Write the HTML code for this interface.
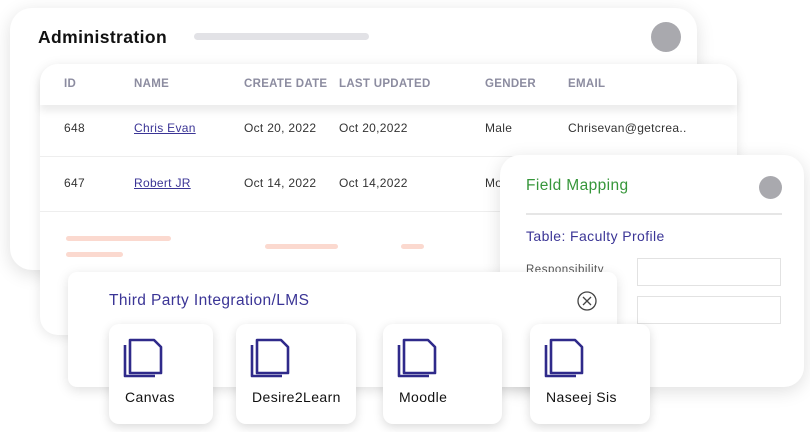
<!DOCTYPE html>
<html><head><style>
*{margin:0;padding:0;box-sizing:border-box}
body{width:810px;height:432px;background:#fff;position:relative;overflow:hidden;font-family:"Liberation Sans",sans-serif;}
.abs{position:absolute}
.card{position:absolute;background:#fff;box-shadow:0 4px 18px rgba(0,0,0,.13);}
.hdr{font-size:11.5px;color:#8c8ca0;font-weight:bold;position:absolute;top:78px;letter-spacing:.3px}
.cell{font-size:12px;color:#333;position:absolute;letter-spacing:.3px}
.lnk{color:#3b3596;text-decoration:underline}
.tile{position:absolute;top:324px;height:100px;background:#fff;border-radius:10px;box-shadow:0 3px 10px rgba(0,0,0,.15)}
.tile svg{position:absolute;left:13px;top:13px}
.tile span{position:absolute;left:16px;top:65px;font-size:14px;color:#111;letter-spacing:.4px}
.pk{position:absolute;height:5px;border-radius:3px;background:#fbd9cf}
</style></head><body>
<div class="card" style="left:10px;top:8px;width:687px;height:262px;border-radius:22px"></div>
<div class="abs" style="left:38px;top:27px;font-size:17.5px;font-weight:bold;color:#111;letter-spacing:.4px">Administration</div>
<div class="abs" style="left:194px;top:33px;width:175px;height:7px;border-radius:4px;background:#e2e2e6"></div>
<div class="abs" style="left:651px;top:22px;width:30px;height:30px;border-radius:50%;background:#a9a9ae"></div>

<div class="card" style="left:40px;top:64px;width:697px;height:271px;border-radius:18px;box-shadow:0 2px 12px rgba(0,0,0,.1)"></div>
<div class="abs" style="left:40px;top:64px;width:697px;height:41px;border-radius:18px 18px 0 0;background:#fff;box-shadow:0 6px 8px rgba(0,0,0,.08)"></div>
<div class="hdr" style="left:64px">ID</div>
<div class="hdr" style="left:134px">NAME</div>
<div class="hdr" style="left:244px">CREATE DATE</div>
<div class="hdr" style="left:339px">LAST UPDATED</div>
<div class="hdr" style="left:485px">GENDER</div>
<div class="hdr" style="left:568px">EMAIL</div>
<div class="cell" style="left:64px;top:121px">648</div>
<div class="cell lnk" style="left:134px;top:121px">Chris Evan</div>
<div class="cell" style="left:244px;top:121px">Oct 20, 2022</div>
<div class="cell" style="left:339px;top:121px">Oct 20,2022</div>
<div class="cell" style="left:485px;top:121px">Male</div>
<div class="cell" style="left:568px;top:121px">Chrisevan@getcrea..</div>
<div class="abs" style="left:40px;top:156px;width:697px;height:1px;background:#eee"></div>
<div class="cell" style="left:64px;top:176px">647</div>
<div class="cell lnk" style="left:134px;top:176px">Robert JR</div>
<div class="cell" style="left:244px;top:176px">Oct 14, 2022</div>
<div class="cell" style="left:339px;top:176px">Oct 14,2022</div>
<div class="cell" style="left:485px;top:176px">Mo</div>
<div class="abs" style="left:40px;top:211px;width:697px;height:1px;background:#eee"></div>
<div class="pk" style="left:66px;top:236px;width:105px"></div>
<div class="pk" style="left:66px;top:252px;width:57px"></div>
<div class="pk" style="left:265px;top:244px;width:73px"></div>
<div class="pk" style="left:401px;top:244px;width:23px"></div>

<div class="card" style="left:500px;top:155px;width:304px;height:232px;border-radius:20px"></div>
<div class="abs" style="left:526px;top:177px;font-size:15.5px;color:#36963a;letter-spacing:.4px">Field Mapping</div>
<div class="abs" style="left:759px;top:176px;width:23px;height:23px;border-radius:50%;background:#a9a9ae"></div>
<div class="abs" style="left:526px;top:213px;width:256px;height:2px;background:#e6e6e6"></div>
<div class="abs" style="left:526px;top:228px;font-size:14px;color:#3b3596;letter-spacing:.4px">Table: Faculty Profile</div>
<div class="abs" style="left:526px;top:264px;font-size:11.5px;color:#555;letter-spacing:.5px">Responsibility</div>
<div class="abs" style="left:637px;top:258px;width:144px;height:28px;border:1px solid #e2e2e2"></div>
<div class="abs" style="left:637px;top:296px;width:144px;height:28px;border:1px solid #e2e2e2"></div>

<div class="card" style="left:68px;top:272px;width:549px;height:115px;border-radius:9px;box-shadow:0 3px 12px rgba(0,0,0,.13)"></div>
<div class="abs" style="left:109px;top:292px;font-size:15.5px;color:#3b3596;letter-spacing:.4px">Third Party Integration/LMS</div>
<svg class="abs" style="left:576px;top:290px" width="22" height="22" viewBox="0 0 22 22"><circle cx="11" cy="11" r="9" fill="none" stroke="#444" stroke-width="1.3"/><path d="M7 7L15 15M15 7L7 15" stroke="#444" stroke-width="1.3"/></svg>

<div class="tile" style="left:109px;width:104px"><svg width="42" height="42" viewBox="0 0 42 42"><path d="M3 8v31h30" fill="none" stroke="#2f2a8a" stroke-width="2.6" stroke-linejoin="round"/><path d="M8 3h24l7 7v26H8z" fill="#fff" stroke="#2f2a8a" stroke-width="2.6" stroke-linejoin="round"/></svg><span>Canvas</span></div>
<div class="tile" style="left:236px;width:120px"><svg width="42" height="42" viewBox="0 0 42 42"><path d="M3 8v31h30" fill="none" stroke="#2f2a8a" stroke-width="2.6" stroke-linejoin="round"/><path d="M8 3h24l7 7v26H8z" fill="#fff" stroke="#2f2a8a" stroke-width="2.6" stroke-linejoin="round"/></svg><span>Desire2Learn</span></div>
<div class="tile" style="left:383px;width:119px"><svg width="42" height="42" viewBox="0 0 42 42"><path d="M3 8v31h30" fill="none" stroke="#2f2a8a" stroke-width="2.6" stroke-linejoin="round"/><path d="M8 3h24l7 7v26H8z" fill="#fff" stroke="#2f2a8a" stroke-width="2.6" stroke-linejoin="round"/></svg><span>Moodle</span></div>
<div class="tile" style="left:530px;width:120px"><svg width="42" height="42" viewBox="0 0 42 42"><path d="M3 8v31h30" fill="none" stroke="#2f2a8a" stroke-width="2.6" stroke-linejoin="round"/><path d="M8 3h24l7 7v26H8z" fill="#fff" stroke="#2f2a8a" stroke-width="2.6" stroke-linejoin="round"/></svg><span>Naseej Sis</span></div>
</body></html>
